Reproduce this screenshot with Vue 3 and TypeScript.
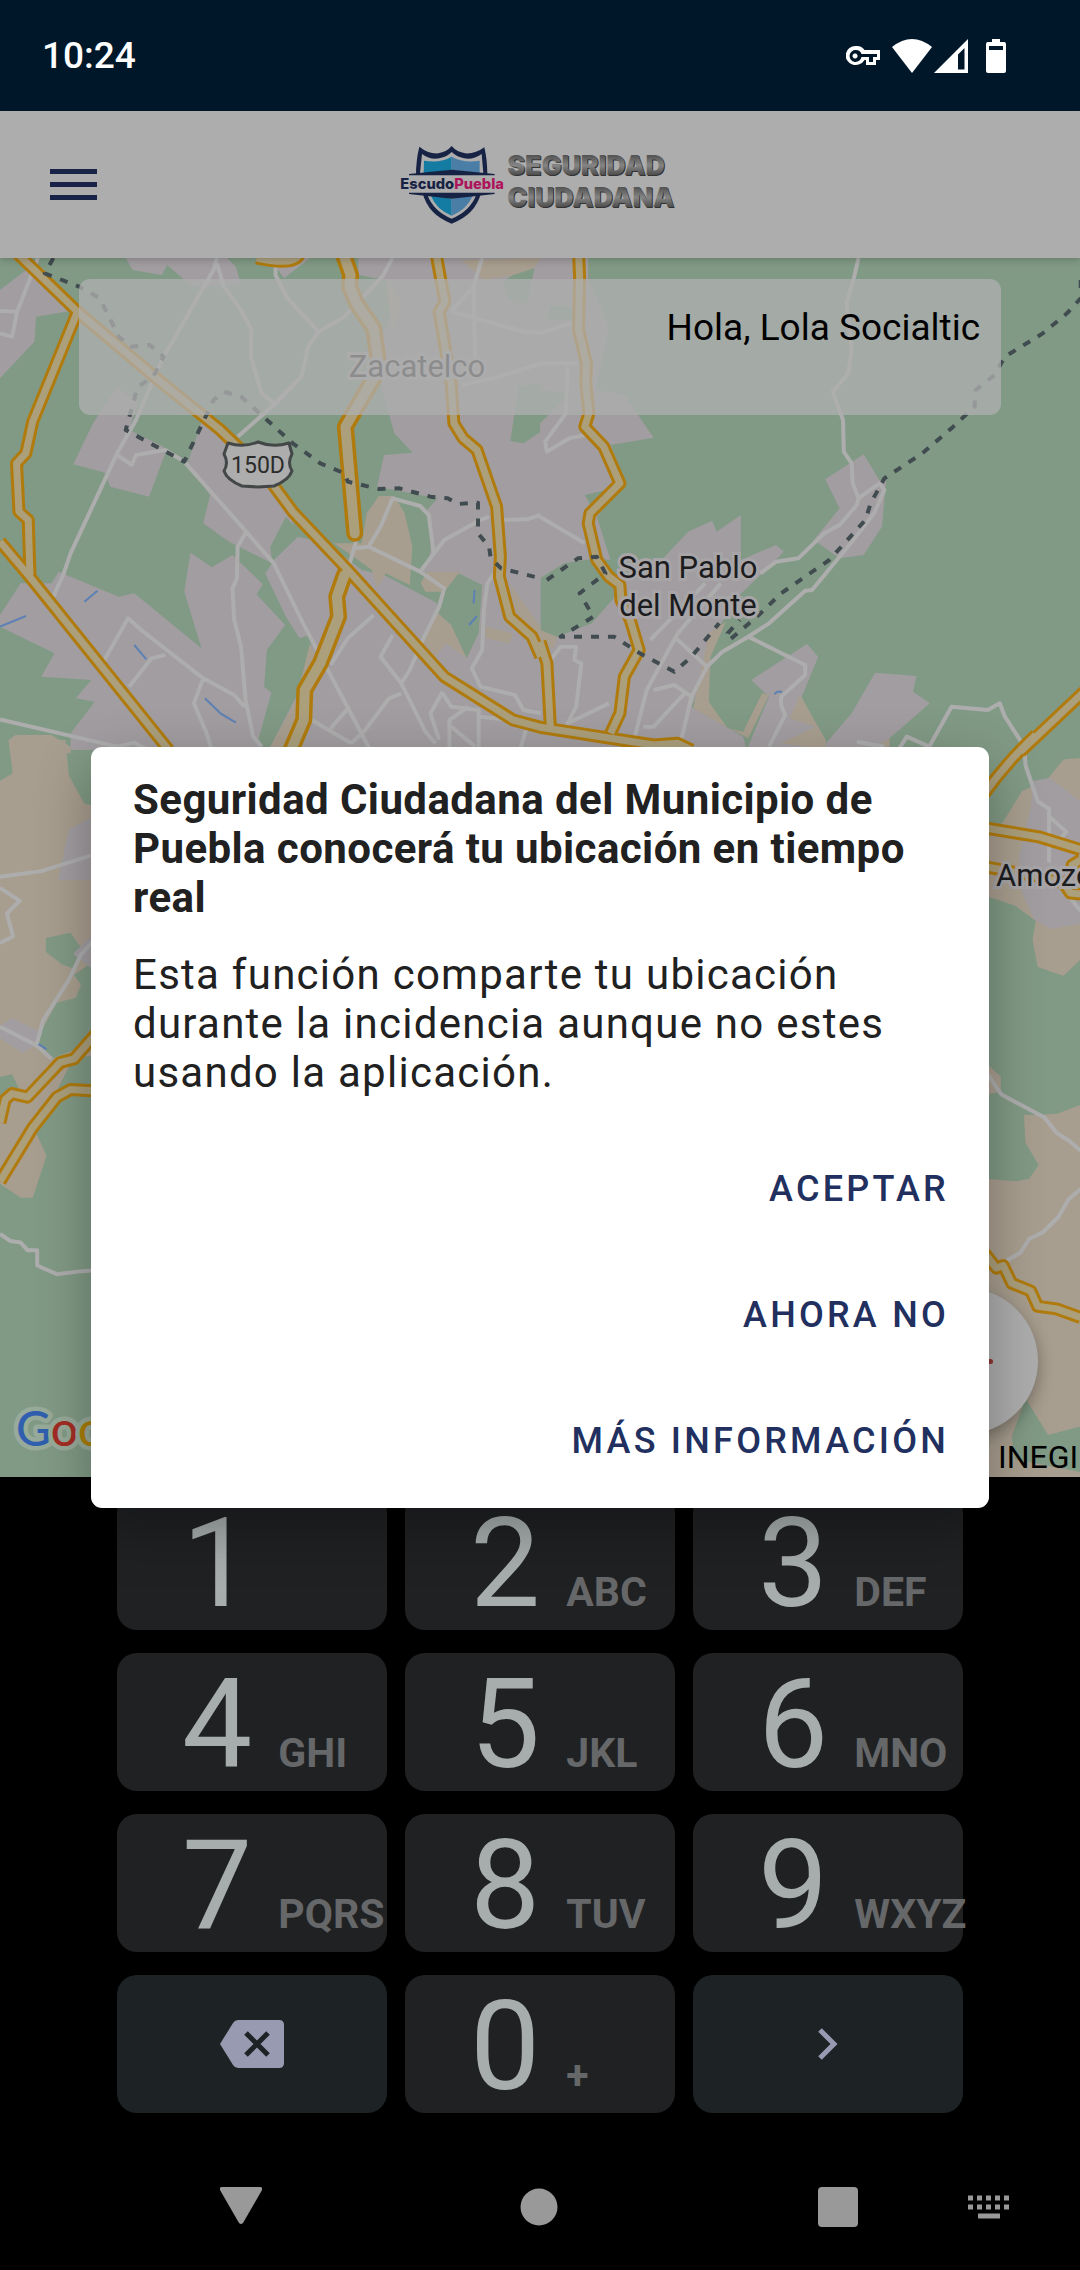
<script setup lang="ts">
interface Key {
  digit: string
  letters: string
}

interface Tile {
  id: string
  transform: string
  town: string
  sand: string
  park: string
  street: string
  water: string
  road: string
  wide: string
  border: string
}

const keys: Key[] = [
  { digit: '1', letters: '' },
  { digit: '2', letters: 'ABC' },
  { digit: '3', letters: 'DEF' },
  { digit: '4', letters: 'GHI' },
  { digit: '5', letters: 'JKL' },
  { digit: '6', letters: 'MNO' },
  { digit: '7', letters: 'PQRS' },
  { digit: '8', letters: 'TUV' },
  { digit: '9', letters: 'WXYZ' },
]

const actions: string[] = ['Aceptar', 'Ahora no', 'Más información']

// The map is stored as four tiles, each with its own drawing units.
const tiles: Tile[] = [
  {
    id: 'north-west',
    transform: 'translate(0 -8) scale(.34439 .33333)',
    town:
      'M0 120L95 45L220 180L105 200L100 275L0 385Z M365 24L385 60L470 75L485 45L560 110L700 105L685 50L660 24Z M780 24L825 85L900 24Z ' +
      'M1040 24L1040 75L1120 90L1145 170L1110 260L1110 420L1145 550L1198 608L1115 615L1095 710L1270 745L1235 785L1255 870L1220 965L1335 972L1385 998L1440 960L1480 990L1570 1160V24Z ' +
      'M340 410L400 460L375 540L475 590L480 610L433 740L320 710L305 668L213 643L270 520Z ' +
      'M590 500L545 640L610 735L590 820L665 875L790 940L770 970L830 1100L870 1165L900 1155L910 1250L850 1360L780 1500H1570V1160L1480 990L1440 960L1270 1060L1115 975L1050 960L950 880L865 860L830 760L680 560Z ' +
      'M0 1095L60 1000L150 1000L170 965L345 1040L390 1030L585 1195L535 1025L553 908L615 952L675 915L763 1003L745 1033L828 1125L775 1200L767 1310L788 1328L750 1470L760 1500H205L205 1450L275 1355L220 1345L265 1290L120 1280L158 1210L0 1130Z',
    sand:
      'M1100 738L1145 738L1175 790L1198 880L1190 1005L1120 970L1095 1015L1080 960L1040 930L970 880H1050L1065 790Z M1240 965H1335L1290 1025H1235L1222 1000Z ' +
      'M1265 1085L1310 1125L1355 1225L1295 1180L1265 1220L1225 1170Z M1410 1130L1490 1150L1480 1180L1410 1165Z M1480 1000L1570 1130V1180L1500 1100Z ' +
      'M1340 30L1570 24L1550 55L1490 75L1405 90Z M1120 90L1170 160L1140 240Z M900 1180L915 1220L905 1270L860 1400L850 1500H780L860 1350Z M25 1470L45 1455L150 1455L205 1490V1510H30Z',
    park:
      'M785 890L830 800L865 840V860L790 935Z M1270 1055L1335 972L1400 1005L1390 1150L1355 1225L1310 1125L1268 1085Z M1505 410L1570 395V545L1520 580L1482 573Z M1160 740L1270 745L1235 785L1255 870L1245 930L1220 960L1195 880L1175 790Z M1460 95L1490 75L1552 55L1530 160L1480 150Z',
    street:
      'M110 24L50 185L35 260L0 250M0 183L50 185M630 24L620 60L470 330L395 510L340 610L205 910L185 970L155 1040M630 40L650 110L700 180L730 240L728 320L760 430L795 460' +
      'M1140 24L1110 80L1000 200L925 245L895 290L875 380L795 465L690 560M800 50V75L835 145L925 245M340 615L383 645L395 615L480 600L535 635L715 845L795 940L880 1120L1075 1500' +
      'M715 845L690 890L688 985L675 1015L680 1110L700 1190L713 1350L735 1460L760 1490M300 1235L372 1105L410 1140L590 1285L680 1335L710 1370M375 1310L440 1225L480 1215M590 1285L563 1360L600 1450L615 1500' +
      'M0 1408L340 1490L390 1478L430 1500M1035 870L1010 960M1030 895L1070 890L1220 965L1290 1015L1275 1070L1225 1175L1190 1260L1165 1300M1070 890L1105 830L1140 745L1220 768L1245 795L1260 915' +
      'M1220 965L1290 870L1395 810L1420 800M1450 810L1530 808L1570 795M1085 1095L1010 1165L960 1245M1140 1155L1105 1220L1165 1300L1235 1445L1265 1480M1165 1330L1130 1345L1060 1440L1020 1480' +
      'M905 1410L1020 1480M960 1435L1015 1370M1285 1325L1250 1390L1275 1470M1530 1430L1510 1500M1400 24L1375 110L1380 350M1310 185L1520 245L1570 248M1340 405L1450 380L1570 340M1310 185L1375 110' +
      'M1435 970L1415 1000L1405 1080L1400 1200L1370 1255L1395 1310L1495 1335L1520 1380L1570 1390M1285 1330L1310 1370L1390 1380V1500M1305 1500V1410L1360 1370M1310 1430L1380 1490M1395 1400L1480 1410',
    water: 'M0 1130L75 1098M245 1055L283 1022M390 1185L425 1228M595 1345L640 1390L685 1418M1378 1020L1375 1060M1385 1098L1362 1125',
    road:
      'M50 10L225 185L460 390L640 540L700 600L790 700L850 785L1010 960L1290 1280L1490 1410L1570 1432M225 185L95 515L75 610L48 640L55 785L82 810L87 975M0 875L90 985L490 1500' +
      'M1266 10L1280 90L1292 155L1275 185L1310 400L1318 520L1345 565L1385 600L1442 770L1453 920L1450 980L1480 1100L1545 1160L1570 1220M745 24Q860 50 870 10',
    wide: 'M996 10L1018 75L1015 110L1035 160L1085 235L1100 345L1085 385L1003 530L1030 850M1000 975L978 1040L983 1100L930 1240L885 1320L882 1410L845 1500',
    border:
      'M155 24L130 70L230 110L290 145L345 260L380 290L435 285L475 320L445 380L400 410L365 540L535 635L620 450L650 425L700 440L770 505L850 580L930 640L1000 670L1010 695L1100 717L1160 715L1250 740L1300 745L1330 762L1388 758V850L1420 890L1425 925L1455 955L1570 985',
  },
  {
    id: 'north-east',
    transform: 'translate(540 -8) scale(.34439 .33333)',
    town:
      'M0 24H140V90L180 180L200 240L180 330L160 420L245 435L330 563L205 585L250 700L165 800L205 930L165 925L70 940L0 985Z ' +
      'M50 1160L150 1120L210 1050L250 990L310 980L380 900L430 845L500 812L513 845L583 795V930L685 885L708 905L640 975L585 1030L500 1160L490 1250L440 1370L410 1500H0V1160Z ' +
      'M613 1290L775 1182L808 1220L760 1340L830 1500H600L665 1340Z M830 1480L905 1390L973 1268L1093 1278L1083 1325L1132 1360L1015 1465L1000 1500H830Z ' +
      'M828 688L940 613L985 690H1005L993 830L940 915L870 925L795 870L870 775Z M440 1370L590 1460L600 1500H400Z',
    sand:
      'M490 1150L540 1115L495 1220L490 1355L545 1435L590 1445L645 1330L665 1335L605 1465L540 1430L445 1375Z M755 1335L830 1470V1500L700 1480L800 1430L725 1405Z M0 1140L50 1160L40 1195L0 1180Z M990 1480L1015 1465V1500H990Z',
    park:
      'M130 735L215 715L160 790Z M0 420L90 430L0 520Z M30 170L70 165L110 180V210L20 210Z M1395 24L1460 24L1400 80Z',
    street:
      'M925 24L910 90L890 160L905 300L895 370L850 425L880 510L882 605L905 640L908 700L925 745L920 765L870 825L825 850L750 925L685 935L640 970M925 745L985 700L1000 720L970 790L910 870L790 1020L770 1022L665 1120L605 1160L530 1205L485 1250L440 1340L410 1470' +
      'M605 1160L770 1245V1275L700 1340V1365L712 1395L665 1490M1040 1500L1065 1460L1130 1490L1195 1370L1300 1380L1335 1360L1350 1400L1400 1480M920 1475L1000 1490M0 800L130 880M525 1000L400 1150L310 1320L275 1460M390 1160L485 1250M480 1000L320 1170' +
      'M330 1320L390 1305L440 1340M300 1430L330 1430L420 1330M30 1230L60 1190L105 1190L100 1230L120 1240L105 1370L80 1420L200 1360M80 350L75 490L15 575L20 605L85 565L130 555M0 250L90 220M0 340H110',
    water: 'M680 1332L690 1325L703 1325',
    road:
      'M112 10L115 80L112 240L135 340L133 400L142 490L130 530L185 590L232 700L145 790L140 820L165 930L200 980L232 1005L235 1050L262 1110L288 1200L245 1280L232 1390L205 1450M0 1432L330 1485L400 1480L440 1500M0 1175L20 1240L30 1430M1580 1325L1395 1505',
    wide: '',
    border:
      'M20 990L110 925L165 920L190 970L115 1030L155 1100L60 1160L215 1160L290 1210L390 1265L440 1220L480 1170L520 1120M1570 90V145L1530 190L1460 250L1350 320L1320 375L1265 420L1262 470L1200 530L1110 610L1000 685L960 760L945 810L840 930L700 1030L630 1100L550 1170L545 1150L580 1110',
  },
  {
    id: 'south-west',
    transform: 'translate(0 482) scale(.34439 .5102)',
    town: '',
    sand: 'M25 0H190L200 70L245 125L280 130V620H215L105 770L135 815L95 897H60L0 870V80L37 65Z',
    park: 'M133 388L205 378L238 410L220 450L180 440L133 415Z M120 570L165 515L220 505L235 480L215 460L280 430V590L150 625L110 600Z M0 660L35 655L60 690L0 740Z',
    street:
      'M0 268L120 257L270 225M0 290L57 315L20 340L38 385L0 398M270 395L235 420L200 470L125 550L105 600M0 562L105 598L150 625M0 968L30 982L60 985L80 1000H108V1030L165 1047L225 1042L270 1040',
    water: 'M112 596L135 606',
    road: 'M0 750L15 705L35 693L80 700L175 632L215 625L280 575M0 865L95 760L165 700L205 685L280 688',
    wide: '',
    border: '',
  },
  {
    id: 'south-east',
    transform: 'translate(540 482) scale(.34439 .5102)',
    town: '',
    sand:
      'M1290 190L1345 160L1400 100L1470 80L1520 38L1570 35V430L1520 462L1445 445L1430 390L1440 355L1380 325L1290 305Z ' +
      'M1290 860L1385 865L1420 860L1448 833L1410 790L1405 735L1500 733L1570 715V1345L1475 1362L1410 1290L1370 1365L1380 1410L1570 1435V1450H1290Z M1290 630L1338 660V690L1290 695Z',
    park: '',
    street:
      'M1405 0L1410 50L1445 120L1478 135V240M1478 150L1528 180L1490 210M1290 645L1340 695L1465 740L1500 770L1535 785L1570 805M1355 1020L1395 1005L1420 978L1460 965L1505 935L1535 900L1570 880M1540 310L1570 335',
    water: '',
    road:
      'M1440 -10Q1360 40 1290 105M1290 172L1450 190L1570 215M1290 248L1450 268L1520 280L1540 300L1570 302M1570 235L1545 245L1540 270M1290 1005L1325 1035L1345 1030L1370 1065L1425 1080L1445 1110L1500 1115L1570 1132',
    wide: '',
    border: '',
  },
]

const suburbs =
  'M69 571L91 560V622H58Z M73 696L91 678V710Z M0 768L12 760L38 773L36 788L22 795L0 780Z M1031 548L1033 523L1050 520L1080 543V666L1050 671L1034 661L1022 635L1019 599Z'
</script>

<template>
  <div class="screen">
    <header class="status">
      <time class="clock">10:24</time>
      <div class="indicators" aria-hidden="true">
        <svg width="34" height="20" viewBox="0 0 34 20" class="key-icon">
          <path fill="#fff" fill-rule="evenodd" d="M10 0a10 9.500 0 1 0 8.500 14H20v5h10v-5h4V4H18.500A10 10 0 0 0 10 0ZM10 4a6 6 0 0 1 5.500 4H31v3h-4v5h-4v-5h-7.500A6 6 0 1 1 10 4Zm-1 3.500a2.500 2.500 0 1 0 .1 0Z" />
        </svg>
        <svg width="40" height="34" viewBox="0 0 40 34"><path fill="#fff" d="M0 8Q20-8 40 8L20 34Z" /></svg>
        <svg width="34" height="34" viewBox="0 0 34 34" class="signal-icon">
          <path fill="#fff" fill-rule="evenodd" d="M34 0V34H0ZM30.500 9L24 15.500V30.500H30.500Z" />
        </svg>
        <svg width="20" height="34" viewBox="0 0 20 34">
          <path fill="#fff" fill-rule="evenodd" d="M6 0H14V3H18Q20 3 20 5V32Q20 34 18 34H2Q0 34 0 32V5Q0 3 2 3H6ZM3 7V11H17V7Z" />
        </svg>
      </div>
    </header>

    <div class="appbar">
      <button class="menu" type="button" aria-label="Menú"><span></span><span></span><span></span></button>
      <svg class="logo" width="310" height="110" viewBox="0 0 930 330" role="img" aria-label="Escudo Puebla Seguridad Ciudadana">
        <defs>
          <linearGradient id="metal" x1="0" y1="0" x2="0" y2="1">
            <stop offset="0.200" stop-color="#555" />
            <stop offset="0.500" stop-color="#858585" />
            <stop offset="0.850" stop-color="#444" />
          </linearGradient>
        </defs>
        <path fill="#172344" d="M118 50Q145 72 175 70Q200 66 215 48Q230 66 256 70Q286 72 313 52Q322 90 322 134H108Q108 90 118 50Z" />
        <path fill="#adadad" d="M126 72Q150 90 178 85Q202 80 215 66Q230 80 252 85Q280 90 305 72L310 130H120Z" />
        <path fill="#147ba3" d="M132 92Q182 100 215 80V120L131 131Z" />
        <path fill="#4b7ea6" d="M215 80Q250 100 299 92L299 131L215 120Z" />
        <path fill="#172344" d="M87 132L215 119L344 132V136H87Z" />
        <path fill="#172344" d="M128 190H303Q285 255 215 281Q145 255 128 190Z" />
        <path fill="#adadad" d="M142 194H289Q270 243 215 266Q160 243 142 194Z" />
        <path fill="#147ba3" d="M152 196L215 206V257Q170 240 152 196Z" />
        <path fill="#4b7ea6" d="M279 196L215 206V257Q260 240 279 196Z" />
        <path fill="#172344" d="M87 188H344V192L215 206L87 192Z" />
        <text class="brand" x="61" y="178"><tspan fill="#172344">Escudo</tspan><tspan fill="#ad145c">Puebla</tspan></text>
        <text class="slogan shade" x="385" y="138">SEGURIDAD</text>
        <text class="slogan shade" x="385" y="234">CIUDADANA</text>
        <text class="slogan" x="382" y="136">SEGURIDAD</text>
        <text class="slogan" x="382" y="232">CIUDADANA</text>
      </svg>
    </div>

    <main class="map">
      <svg class="canvas" viewBox="0 0 1080 1219" preserveAspectRatio="xMidYMin slice" aria-hidden="true">
        <rect width="1080" height="1219" fill="#819a85" />
        <g v-for="t in tiles" :key="t.id" :transform="t.transform">
          <path :d="t.town" fill="#a19da1" />
          <path :d="t.sand" fill="#a89e8f" />
          <path :d="t.park" fill="#819a85" />
        </g>
        <path :d="suburbs" fill="#a19da1" />
        <g v-for="t in tiles" :key="t.id" :transform="t.transform" class="lines">
          <path :d="t.street" class="street" />
          <path :d="t.water" class="water" />
        </g>
        <g v-for="t in tiles" :key="t.id" :transform="t.transform" class="lines">
          <path :d="t.wide" class="casing wide" />
          <path :d="t.road" class="casing" />
        </g>
        <g v-for="t in tiles" :key="t.id" :transform="t.transform" class="lines">
          <path :d="t.wide" class="fill wide" />
          <path :d="t.road" class="fill" />
          <path :d="t.border" class="border" />
        </g>
        <path d="M228 185Q243 190 258 184Q273 190 289 185L292 196Q287 205 292 213Q289 222 274 228L258 229L242 228Q227 222 224 213Q229 205 224 196Z" fill="#adadad" stroke="#444748" stroke-width="3" stroke-linejoin="round" />
        <text x="258" y="215" class="route">150D</text>
        <text x="417" y="119" class="place">Zacatelco</text>
        <text x="688" y="320" class="place">San Pablo</text>
        <text x="688" y="358" class="place">del Monte</text>
        <text x="996" y="628" class="place left">Amozoc</text>
        <text x="16" y="1188" class="google"><tspan fill="#2f5fae">G</tspan><tspan fill="#a32d24">o</tspan><tspan fill="#aa7f05">o</tspan></text>
        <text x="998" y="1210" class="credit">INEGI</text>
      </svg>
      <section class="greeting">Hola, Lola Socialtic</section>
      <button class="fab" type="button" aria-label="Emergencia"><span></span></button>
    </main>

    <section class="keypad" aria-label="Teclado">
      <button v-for="k in keys" :key="k.digit" class="key" type="button">
        <span class="digit">{{ k.digit }}</span><span class="letters">{{ k.letters }}</span>
      </button>
      <button class="key special" type="button" aria-label="Borrar">
        <svg width="64" height="48" viewBox="0 0 64 48">
          <path fill="#979ab0" d="M18 0H59Q64 0 64 5V43Q64 48 59 48H18Q15 48 13 45L0 24L13 3Q15 0 18 0Z" />
          <path d="M26 13L48 35M48 13L26 35" stroke="#1d2225" stroke-width="5" />
        </svg>
      </button>
      <button class="key" type="button"><span class="digit">0</span><span class="letters">+</span></button>
      <button class="key special" type="button" aria-label="Siguiente">
        <svg width="22" height="32" viewBox="0 0 22 32"><path d="M3 2L17 16L3 30" fill="none" stroke="#979ab0" stroke-width="5" /></svg>
      </button>
    </section>

    <nav class="system">
      <div class="system-main">
        <button type="button" aria-label="Atrás">
          <svg width="42" height="40" viewBox="0 0 42 40"><path fill="#999" d="M2 0H40Q43 0 42 3L23 36Q21 38 19 36L0 3Q-1 0 2 0Z" /></svg>
        </button>
        <button type="button" aria-label="Inicio">
          <svg width="38" height="38" viewBox="0 0 38 38"><circle cx="19" cy="19" r="18.500" fill="#999" /></svg>
        </button>
        <button type="button" aria-label="Recientes">
          <svg width="40" height="40" viewBox="0 0 40 40"><rect width="40" height="40" rx="4" fill="#999" /></svg>
        </button>
      </div>
      <button class="switcher" type="button" aria-label="Cambiar teclado">
        <svg width="42" height="24" viewBox="0 0 42 24">
          <path d="M0 3H42M0 12H42" stroke="#999" stroke-width="5" stroke-dasharray="5 4" />
          <path d="M10 21H32" stroke="#999" stroke-width="5" />
        </svg>
      </button>
    </nav>

    <div class="overlay">
      <section class="dialog" role="alertdialog" aria-labelledby="dialog-title">
        <h1 id="dialog-title">Seguridad Ciudadana del Municipio de Puebla conocerá tu ubicación en tiempo real</h1>
        <p>Esta función comparte tu ubicación durante la incidencia aunque no estes usando la aplicación.</p>
        <div class="actions">
          <button v-for="a in actions" :key="a" type="button">{{ a }}</button>
        </div>
      </section>
    </div>
  </div>
</template>

<style>
body {
  background: #000;
}
</style>

<style scoped>
.screen {
  position: relative;
  display: flex;
  flex-direction: column;
  min-height: 100vh;
  overflow: hidden;
  background: #000;
  font-family: Roboto, 'Liberation Sans', sans-serif;
}
button {
  margin: 0;
  padding: 0;
  border: 0;
  background: none;
  font: inherit;
}
svg {
  display: block;
}
.status {
  display: flex;
  align-items: center;
  justify-content: space-between;
  height: 111px;
  padding: 0 74px 0 42px;
  background: #00172a;
  color: #fff;
}
.clock {
  font-size: 37px;
  font-weight: 500;
}
.indicators {
  display: flex;
  align-items: center;
}
.key-icon {
  margin-right: 12px;
}
.signal-icon {
  margin: 0 18px 0 2px;
}
.appbar {
  position: relative;
  z-index: 1;
  display: grid;
  grid-template-columns: 1fr auto 1fr;
  align-items: center;
  height: 147px;
  background: #adadad;
  box-shadow: 0 2px 8px rgba(0, 0, 0, 0.2);
}
.menu {
  display: flex;
  flex-direction: column;
  gap: 8px;
  width: 47px;
  margin-left: 50px;
}
.menu span {
  height: 5px;
  background: #182347;
}
.logo {
  margin-right: 10px;
}
.brand {
  font-family: Inter, sans-serif;
  font-size: 44px;
  font-weight: 800;
}
.slogan {
  font-family: Inter, sans-serif;
  font-size: 80px;
  font-weight: 900;
  fill: url(#metal);
}
.slogan.shade {
  fill: #333;
}
.map {
  position: relative;
  flex: 1;
  padding: 21px 79px;
}
.canvas {
  position: absolute;
  inset: 0;
  width: 100%;
  height: 100%;
}
.lines path {
  fill: none;
  stroke-linejoin: round;
  vector-effect: non-scaling-stroke;
}
.lines .street {
  stroke: #adadad;
  stroke-width: 4px;
}
.lines .water {
  stroke: #5d80b5;
  stroke-width: 2px;
}
.lines .casing {
  stroke: #b07b0c;
  stroke-width: 13px;
}
.lines .fill {
  stroke: #ab9f7c;
  stroke-width: 7px;
}
.lines .casing.wide {
  stroke-width: 17px;
  stroke-linecap: round;
}
.lines .fill.wide {
  stroke-width: 10px;
  stroke-linecap: round;
}
.lines .border {
  stroke: #414c50;
  stroke-width: 4px;
  stroke-dasharray: 8 9;
}
.place {
  font-size: 31px;
  text-anchor: middle;
  fill: #1c1c1e;
  stroke: #a7a5a7;
  stroke-width: 6px;
  paint-order: stroke;
}
.place.left {
  text-anchor: start;
}
.route {
  font-size: 23px;
  text-anchor: middle;
  fill: #2b2b2b;
}
.google {
  font-family: Lato, sans-serif;
  font-size: 48px;
  font-weight: 500;
  stroke: #98aa9a;
  stroke-width: 9px;
  stroke-linejoin: round;
  paint-order: stroke;
}
.credit {
  font-size: 32px;
  fill: #000;
}
.greeting {
  position: relative;
  box-sizing: border-box;
  height: 136px;
  padding: 27px 21px;
  border-radius: 11px;
  background: rgba(174, 174, 174, 0.77);
  color: #000;
  font-size: 37px;
  line-height: 44px;
  text-align: right;
}
.fab {
  position: absolute;
  right: 42px;
  bottom: 43px;
  display: flex;
  align-items: center;
  justify-content: center;
  width: 146px;
  height: 146px;
  border-radius: 50%;
  background: #adadad;
  box-shadow: 0 6px 16px rgba(0, 0, 0, 0.3);
}
.fab span {
  width: 56px;
  height: 5px;
  border-radius: 3px;
  background: #8f3531;
}
.keypad {
  display: grid;
  grid-template-columns: repeat(3, 1fr);
  grid-auto-rows: 138px;
  gap: 23px 18px;
  padding: 15px 117px 0;
}
.key {
  display: flex;
  align-items: baseline;
  gap: 26px;
  min-width: 0;
  padding: 6px 0 0 65px;
  border-radius: 20px;
  background: #202123;
}
.digit {
  color: #a7adad;
  font-size: 125px;
  line-height: 132px;
}
.letters {
  color: #666769;
  font-size: 41px;
  font-weight: 700;
}
.key.special {
  align-items: center;
  justify-content: center;
  padding: 0;
  background: #1d2225;
}
.system {
  display: flex;
  align-items: center;
  height: 157px;
  padding: 30px 70px 0 111px;
  box-sizing: border-box;
}
.system-main {
  display: grid;
  flex: 1;
  grid-template-columns: repeat(3, 1fr);
  gap: 38px;
}
.system button {
  display: flex;
  align-items: center;
  justify-content: center;
}
.overlay {
  position: absolute;
  inset: 0;
  z-index: 2;
  display: flex;
  align-items: center;
  padding: 0 91px 15px;
}
.dialog {
  flex: 1;
  padding: 28px 40px 4px 42px;
  border-radius: 11px;
  background: #fff;
  box-shadow: 0 20px 56px rgba(0, 0, 0, 0.3);
  color: #212121;
  font-size: 42px;
  line-height: 49px;
}
.dialog h1 {
  margin: 0 0 28px;
  font-size: 42px;
  font-weight: 700;
  letter-spacing: 0.01em;
}
.dialog p {
  margin: 0 0 29px;
  letter-spacing: 0.03em;
}
.actions {
  display: flex;
  flex-direction: column;
  align-items: flex-end;
}
.actions button {
  height: 126px;
  color: #21305f;
  font-size: 36px;
  font-weight: 500;
  letter-spacing: 0.09em;
  text-transform: uppercase;
}
</style>
